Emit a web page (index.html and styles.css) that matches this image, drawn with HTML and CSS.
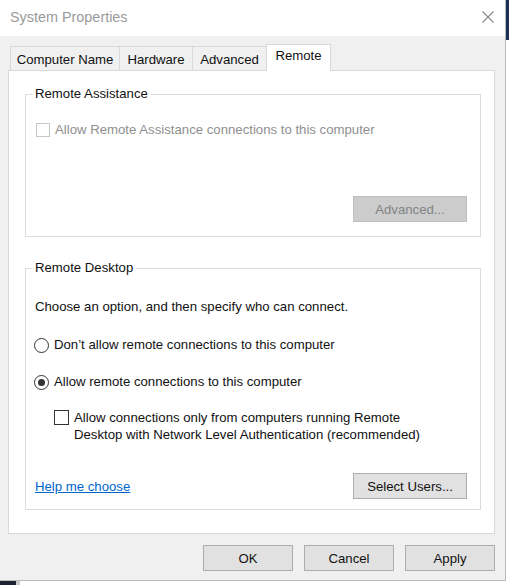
FILE: index.html
```html
<!DOCTYPE html>
<html>
<head>
<meta charset="utf-8">
<title>System Properties</title>
<link rel="stylesheet" href="styles.css">
</head>
<body>
<div class="desktop">
  <div class="bg-window bg-right"></div>
  <div class="bg-window bg-bottom"><span class="bg-dark"></span></div>

  <div class="dialog">
    <div class="titlebar">
      <span class="title">System Properties</span>
      <svg class="close" width="12" height="12" viewBox="0 0 12 12"><path d="M0.5 0.5 L11.5 11.5 M11.5 0.5 L0.5 11.5" stroke="#8a8a8a" stroke-width="1.1" fill="none"/></svg>
    </div>

    <div class="tabs">
      <div class="tab tab-cn">Computer Name</div>
      <div class="tab tab-hw">Hardware</div>
      <div class="tab tab-adv">Advanced</div>
      <div class="tab active">Remote</div>
    </div>

    <div class="panel">
      <fieldset class="group g1">
        <legend>Remote Assistance</legend>
        <div class="row disabled ra-row">
          <span class="check off"></span>
          <span>Allow Remote Assistance connections to this computer</span>
        </div>
        <div class="btn-row adv-row">
          <button class="btn disabled-btn wide">Advanced...</button>
        </div>
      </fieldset>

      <fieldset class="group g2">
        <legend>Remote Desktop</legend>
        <div class="row choose">Choose an option, and then specify who can connect.</div>
        <div class="row radio-row r1">
          <span class="radio"></span>
          <span>Don’t allow remote connections to this computer</span>
        </div>
        <div class="row radio-row r2">
          <span class="radio checked"></span>
          <span>Allow remote connections to this computer</span>
        </div>
        <div class="row nla-row">
          <span class="check"></span>
          <span class="nla-text">Allow connections only from computers running Remote<br>Desktop with Network Level Authentication (recommended)</span>
        </div>
        <div class="btn-row bottom-row">
          <a class="link" href="#">Help me choose</a>
          <button class="btn wide">Select Users...</button>
        </div>
      </fieldset>
    </div>

    <div class="footer">
      <button class="btn">OK</button>
      <button class="btn">Cancel</button>
      <button class="btn">Apply</button>
    </div>
  </div>
</div>
</body>
</html>
```

FILE: styles.css
```css
html, body {
  margin: 0;
  padding: 0;
}

body {
  width: 509px;
  height: 585px;
  overflow: hidden;
  font-family: "Liberation Sans", Arial, sans-serif;
  font-size: 13.2px;
  color: #111;
}

.desktop {
  position: relative;
  width: 509px;
  height: 585px;
  background: #ffffff;
  overflow: hidden;
}

.bg-window {
  position: absolute;
}

.bg-right {
  left: 505px;
  top: 0;
  width: 4px;
  height: 585px;
  background: linear-gradient(to bottom, #1d3354 0, #1d3354 40px, #ffffff 40px);
  border-left: 1px solid #d0d0d0;
  box-sizing: border-box;
}

.bg-bottom {
  left: 0;
  top: 580px;
  width: 509px;
  height: 5px;
  background: #ffffff;
  display: flex;
}

.bg-dark {
  display: block;
  width: 16px;
  height: 5px;
  background: #1c2432;
  border-right: 4px solid #c9c9c9;
}

.dialog {
  position: absolute;
  left: 0;
  top: 0;
  width: 506px;
  height: 581px;
  box-sizing: border-box;
  background: #f0f0f0;
  border-right: 1px solid #b9b9b9;
  border-bottom: 1px solid #b9b9b9;
  display: flex;
  flex-direction: column;
}

.titlebar {
  height: 36px;
  flex: none;
  background: #ffffff;
  display: flex;
  align-items: center;
  justify-content: space-between;
  padding: 0 11px 2px 10px;
  box-sizing: border-box;
}

.title {
  font-size: 14.4px;
  color: #9a9a9a;
}

.close {
  display: block;
}

.tabs {
  flex: none;
  display: flex;
  align-items: flex-end;
  height: 26px;
  margin-top: 8px;
  padding-left: 10px;
}

.tab {
  height: 24px;
  box-sizing: border-box;
  border: 1px solid #d9d9d9;
  border-bottom: none;
  border-right: none;
  background: #f0f0f0;
  padding-top: 4px;
  line-height: 18px;
  text-align: center;
  white-space: nowrap;
}

.tab-cn {
  width: 109px;
}

.tab-hw {
  width: 73px;
}

.tab-adv {
  width: 75px;
  border-right: 1px solid #d9d9d9;
}

.tab.active {
  position: relative;
  z-index: 1;
  width: 65px;
  height: 27px;
  margin-bottom: -1px;
  margin-left: -1px;
  background: #ffffff;
  border-left: 1px solid #d9d9d9;
  border-right: 1px solid #d9d9d9;
  padding-top: 2px;
}

.panel {
  flex: 1;
  margin: 0 10px 0 8px;
  background: #ffffff;
  border: 1px solid #d9d9d9;
  padding: 15px 13px 0 16px;
  box-sizing: border-box;
}

.group {
  margin: 0;
  border: 1px solid #dcdcdc;
  padding: 0 13px 0 9px;
  min-width: 0;
}

.group legend {
  padding: 0 3px 0 2px;
  margin-left: -2px;
  line-height: 16px;
  color: #111;
}

.g1 {
  padding-bottom: 14px;
}

.g2 {
  margin-top: 23px;
  padding-bottom: 10px;
}

.row {
  display: flex;
  align-items: center;
  line-height: 16px;
  white-space: nowrap;
}

.ra-row {
  margin-top: 20px;
}

.disabled {
  color: #8f8f8f;
}

.check {
  display: block;
  width: 14px;
  height: 14px;
  box-sizing: border-box;
  border: 1px solid #333333;
  background: #ffffff;
  margin-right: 5px;
  flex: none;
}

.check.off {
  border-color: #c6c6c6;
  margin-left: 1px;
  margin-right: 5px;
}

.btn-row {
  display: flex;
  justify-content: flex-end;
  align-items: center;
}

.adv-row {
  margin-top: 58px;
}

.btn {
  font-family: "Liberation Sans", Arial, sans-serif;
  font-size: 13.2px;
  color: #111;
  width: 90px;
  height: 26px;
  box-sizing: border-box;
  border: 1px solid #adadad;
  background: #e1e1e1;
  padding: 0;
  margin: 0;
}

.btn.wide {
  width: 114px;
}

.disabled-btn {
  background: #cccccc;
  border-color: #bfbfbf;
  color: #838383;
}

.choose {
  margin-top: 23px;
}

.radio-row.r1 {
  margin-top: 22px;
}

.radio-row.r2 {
  margin-top: 21px;
}

.radio {
  display: block;
  position: relative;
  width: 15px;
  height: 15px;
  box-sizing: border-box;
  border: 1px solid #333333;
  border-radius: 50%;
  background: #ffffff;
  margin-left: -1px;
  margin-right: 5px;
  flex: none;
}

.radio.checked::after {
  content: "";
  position: absolute;
  left: 3px;
  top: 3px;
  width: 7px;
  height: 7px;
  border-radius: 50%;
  background: #333333;
}

.nla-row {
  margin-top: 19px;
  margin-left: 19px;
  align-items: flex-start;
}

.nla-row .check {
  width: 15px;
  height: 15px;
  margin-top: 1px;
  margin-right: 5px;
}

.nla-text {
  line-height: 17px;
}

.bottom-row {
  margin-top: 30px;
  justify-content: space-between;
}

.link {
  color: #0066cc;
  text-decoration: underline;
  line-height: 16px;
  margin-top: 1px;
}

.footer {
  flex: none;
  display: flex;
  justify-content: flex-end;
  gap: 11px;
  padding: 11px 10px 9px 0;
}
```
